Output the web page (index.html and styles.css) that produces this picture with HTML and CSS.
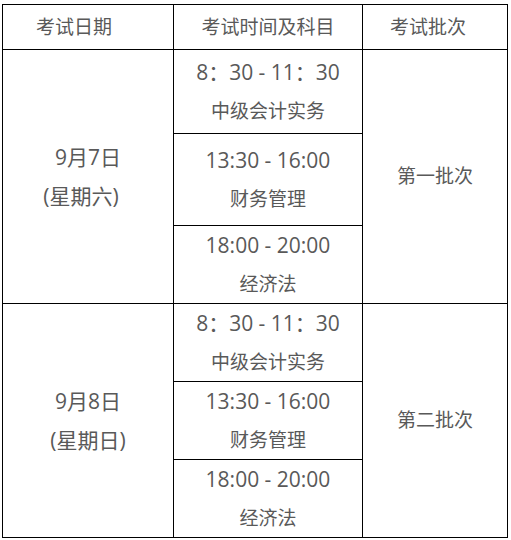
FILE: index.html
```html
<!DOCTYPE html>
<html lang="zh-CN">
<head>
<meta charset="utf-8">
<title>考试安排</title>
<link rel="stylesheet" href="styles.css">
</head>
<body>
<div class="page">
  <div class="schedule">
    <div class="cell head head-date">考试日期</div>
    <div class="cell head">考试时间及科目</div>
    <div class="cell head head-batch">考试批次</div>

    <div class="cell date span3"><div>9月7日</div><div class="weekday-shift">(星期六)</div></div>
    <div class="cell"><div class="time">8：30 - 11：30</div><div>中级会计实务</div></div>
    <div class="cell batch span3">第一批次</div>
    <div class="cell"><div class="time">13:30 - 16:00</div><div>财务管理</div></div>
    <div class="cell"><div class="time">18:00 - 20:00</div><div>经济法</div></div>

    <div class="cell date span3"><div>9月8日</div><div>(星期日)</div></div>
    <div class="cell"><div class="time">8：30 - 11：30</div><div>中级会计实务</div></div>
    <div class="cell batch span3">第二批次</div>
    <div class="cell"><div class="time">13:30 - 16:00</div><div>财务管理</div></div>
    <div class="cell"><div class="time">18:00 - 20:00</div><div>经济法</div></div>
  </div>
</div>
</body>
</html>
```

FILE: styles.css
```css
html, body {
  margin: 0;
  padding: 0;
  background: #fff;
}

.page {
  padding: 4px 0 0 2px;
}

.schedule {
  display: grid;
  grid-template-columns: 170px 188px 144px;
  grid-template-rows: 44px 83px 91px 77px 77px 77px 77px;
  gap: 1px;
  padding: 1px;
  background: #000;
  width: max-content;
  font-family: "Open Sans", "Noto Sans CJK SC", sans-serif;
  font-size: 19px;
  color: #595959;
}

.cell {
  background: #fff;
  display: flex;
  flex-direction: column;
  align-items: center;
  justify-content: center;
  line-height: 39px;
  white-space: nowrap;
}

.span3 {
  grid-row: span 3;
}

.head-date {
  padding-right: 28px;
}

.head-batch {
  padding-right: 14px;
}

.time {
  font-size: 21px;
}

.date {
  font-size: 21px;
}

.weekday-shift {
  padding-right: 14px;
}
```
